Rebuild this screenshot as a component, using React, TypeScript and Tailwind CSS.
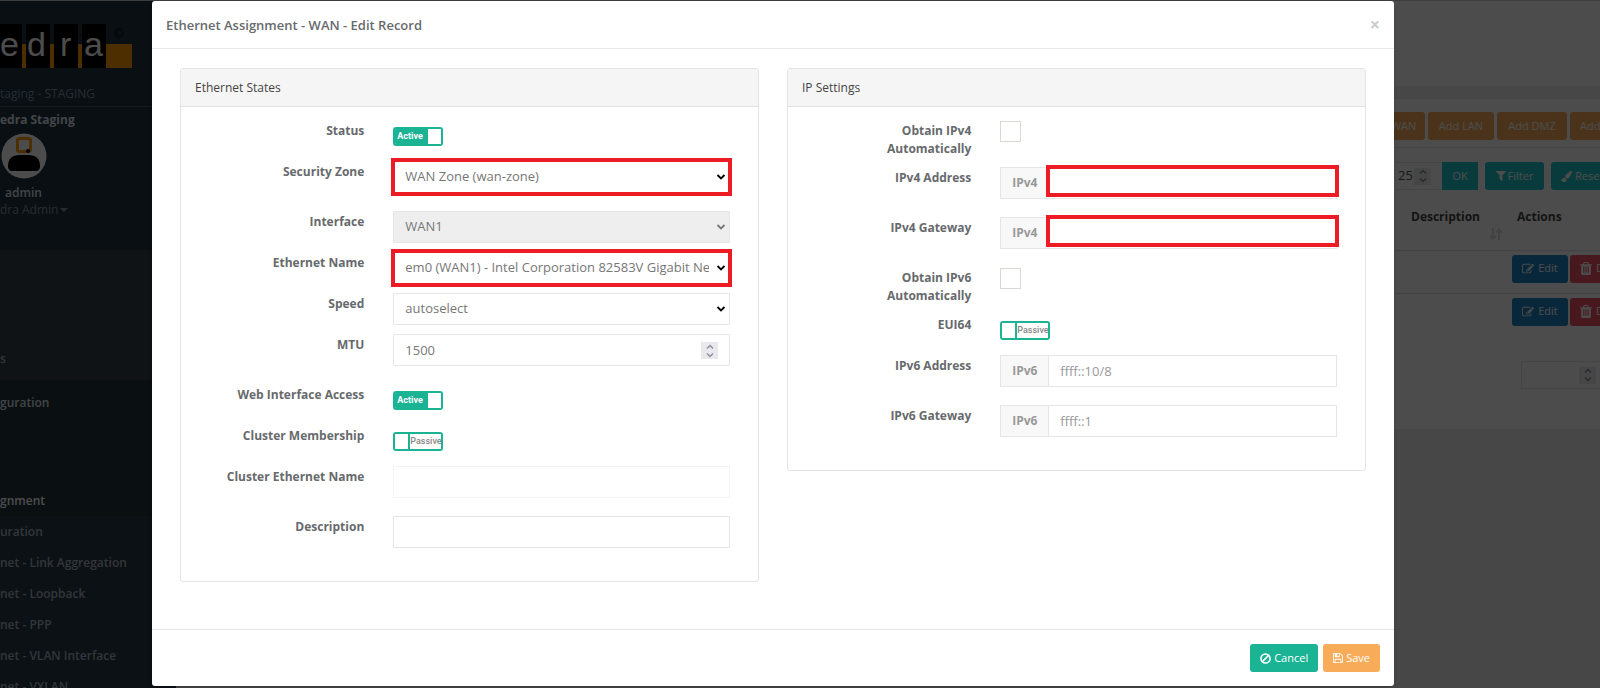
import { useState } from 'react';
import type { ReactNode } from 'react';
import { FaPaintBrush } from 'react-icons/fa';

function BanIcon() {
  return (
    <svg viewBox="0 0 12 12" className="size-[11px]" fill="none" stroke="currentColor" strokeWidth="1.7">
      <circle cx="6" cy="6" r="5" />
      <path d="M2.6 9.4 9.4 2.6" />
    </svg>
  );
}

function SaveIcon() {
  return (
    <svg viewBox="0 128 1536 1536" className="size-[10px]" fill="currentColor">
      <path d="M384 1536h768v-384h-768v384zM1280 1536h128v-896q0-14-10-38.5t-20-34.5l-281-281q-10-10-34-20t-39-10v416q0 40-28 68t-68 28h-576q-40 0-68-28t-28-68v-416h-128v1280h128v-416q0-40 28-68t68-28h832q40 0 68 28t28 68v416zM896 608v-320q0-13-9.5-22.5t-22.5-9.5h-192q-13 0-22.5 9.5t-9.5 22.5v320q0 13 9.5 22.5t22.5 9.5h192q13 0 22.5-9.5t9.5-22.5zM1536 640v928q0 40-28 68t-68 28h-1344q-40 0-68-28t-28-68v-1344q0-40 28-68t68-28h928q40 0 88 20t76 48l280 280q28 28 48 76t20 88z" />
    </svg>
  );
}

function EditIcon() {
  return (
    <svg viewBox="0 0 1792 1792" className="size-3" fill="currentColor">
      <path d="M888 1184l116-116-152-152-116 116v56h96v96h56zM1328 464q-16-16-33 1l-350 350q-17 17-1 33t33-1l350-350q17-17 1-33zM1408 1058v190q0 119-84.5 203.5t-203.5 84.5h-832q-119 0-203.5-84.5t-84.5-203.5v-832q0-119 84.5-203.5t203.5-84.5h832q63 0 117 25 15 7 18 23 3 17-9 29l-49 49q-14 14-32 8-23-6-45-6h-832q-66 0-113 47t-47 113v832q0 66 47 113t113 47h832q66 0 113-47t47-113v-126q0-13 9-22l64-64q15-15 35-7t20 29zM1312 320l288 288-672 672h-288v-288zM1756 452l-92 92-288-288 92-92q28-28 68-28t68 28l152 152q28 28 28 68t-28 68z" />
    </svg>
  );
}

function TrashIcon() {
  return (
    <svg viewBox="192 128 1408 1536" className="h-[13px] w-3" fill="currentColor">
      <path d="M704 1376v-704q0-14-9-23t-23-9h-64q-14 0-23 9t-9 23v704q0 14 9 23t23 9h64q14 0 23-9t9-23zm256 0v-704q0-14-9-23t-23-9h-64q-14 0-23 9t-9 23v704q0 14 9 23t23 9h64q14 0 23-9t9-23zm256 0v-704q0-14-9-23t-23-9h-64q-14 0-23 9t-9 23v704q0 14 9 23t23 9h64q14 0 23-9t9-23zm-544-992h448l-48-117q-7-9-17-11h-317q-10 2-17 11zm928 32v64q0 14-9 23t-23 9h-96v948q0 83-47 143.5t-113 60.5h-832q-66 0-113-59.5t-47-141.5v-952h-96q-14 0-23-9t-9-23v-64q0-14 9-23t23-9h309l70-167q15-37 54-63t79-26h320q40 0 79 26t54 63l70 167h309q14 0 23 9t9 23z" />
    </svg>
  );
}

function FilterIcon() {
  return (
    <svg viewBox="192 256 1408 1408" className="size-[10px]" fill="currentColor">
      <path d="M1595 295q17 41-14 70l-493 493v742q0 42-39 59-13 5-25 5-27 0-45-19l-256-256q-19-19-19-45v-486l-493-493q-31-29-14-70 17-39 59-39h1280q42 0 59 39z" />
    </svg>
  );
}

/* Up/down stepper shown inside number fields */
function Stepper() {
  return (
    <span className="pointer-events-none flex size-[17px] items-center justify-center bg-[#e9e9ed] text-[#8f8f9d]">
      <svg viewBox="0 0 8 14" className="h-[14px] w-2" fill="none" stroke="currentColor" strokeWidth="1.5">
        <path d="M1 4.5 4 1.5l3 3M1 9.5l3 3 3-3" />
      </svg>
    </span>
  );
}

function Highlight({ slim }: { slim?: boolean }) {
  return (
    <span
      className={
        slim
          ? 'pointer-events-none absolute -inset-x-[2px] -top-[2px] bottom-[2px] border-4 border-[#ed1c24]'
          : 'pointer-events-none absolute -inset-x-[2px] -inset-y-[3px] border-4 border-[#ed1c24]'
      }
    />
  );
}

function Row({ id, label, tall, children }: { id: string; label: string; tall?: boolean; children: ReactNode }) {
  return (
    <div className={tall ? 'mb-[18px] flex gap-7' : 'mb-[9px] flex gap-7'}>
      <label htmlFor={id} className="w-[30%] shrink-0 pt-[2px] pr-px text-right text-xs leading-[18px] font-bold">
        {label}
      </label>
      <div className="relative min-h-8 min-w-0 flex-1">{children}</div>
    </div>
  );
}

function Toggle({ id, initial = false }: { id: string; initial?: boolean }) {
  const [on, setOn] = useState(initial);
  return (
    <label className="mt-[7px] flex h-[19px] w-[50px] cursor-pointer overflow-hidden rounded-[3px] border-2 border-[#1ab394] font-[Roboto,sans-serif] text-[9px] leading-[15px]">
      <input id={id} type="checkbox" checked={on} onChange={() => setOn(!on)} className="sr-only" />
      {on ? (
        <>
          <span className="flex-1 bg-[#1ab394] pl-[2px] font-bold text-white">Active</span>
          <span className="w-[13px] bg-white" />
        </>
      ) : (
        <>
          <span className="w-[15px] shrink-0 border-r-2 border-[#1ab394] bg-white" />
          <span className="flex-1 bg-white font-medium text-[#888]">Passive</span>
        </>
      )}
    </label>
  );
}

function Select({ id, value, disabled, highlight }: { id: string; value: string; disabled?: boolean; highlight?: boolean }) {
  return (
    <>
      <select
        id={id}
        disabled={disabled}
        className="h-8 w-full appearance-none overflow-hidden rounded-[1px] border border-[#e5e6e7] bg-white pr-5 pl-[11px] text-[13px] text-[#777] disabled:bg-[#eee] disabled:opacity-100"
      >
        <option>{value}</option>
      </select>
      {highlight && <Highlight />}
      <svg
        viewBox="0 0 10 8"
        className={disabled ? 'pointer-events-none absolute top-3 right-1 h-2 w-[10px] text-[#777]' : 'pointer-events-none absolute top-3 right-1 h-2 w-[10px] text-black'}
        fill="none"
        stroke="currentColor"
        strokeWidth="1.8"
      >
        <path d="M1.5 2 5 5.5 8.5 2" />
      </svg>
    </>
  );
}

function AddressField({ id, addon, placeholder, highlight }: { id: string; addon: string; placeholder?: string; highlight?: boolean }) {
  return (
    <div className="flex h-8">
      <span className="flex w-12 shrink-0 items-center justify-center border border-r-0 border-[#e5e6e7] bg-[#f8f8f8] text-xs font-bold text-[#999]">
        {addon}
      </span>
      <div className="relative flex-1">
        <input id={id} type="text" placeholder={placeholder} className="h-8 w-full border border-[#e5e6e7] bg-white px-[11px] text-[13px] placeholder:text-[#999]" />
        {highlight && <Highlight slim />}
      </div>
    </div>
  );
}

function CheckBox({ id }: { id: string }) {
  return <input id={id} type="checkbox" className="mt-px block size-[21px] appearance-none border border-[#d9d8d3] bg-white checked:bg-[#1ab394]" />;
}

function Panel({ title, children }: { title: string; children: ReactNode }) {
  return (
    <section className="flex-1 rounded-[3px] border border-[#e4e4e4] bg-white">
      <h3 className="border-b border-[#e0e0e0] bg-[#f5f5f5] px-[14px] py-[9px] text-xs leading-[19px] text-[#444]">{title}</h3>
      <div className="px-7 pt-[13px] pb-[15px]">{children}</div>
    </section>
  );
}

function Sidebar() {
  const links = ['uration', 'net - Link Aggregation', 'net - Loopback', 'net - PPP', 'net - VLAN Interface', 'net - VXLAN'];
  return (
    <nav className="w-44 shrink-0 bg-[#2a3a46] text-xs font-semibold whitespace-nowrap text-[#a7b1c2]">
      <div className="h-[249px] bg-[#1f3340]">
        <svg viewBox="0 0 136 46" className="block h-[69px] w-[136px] pt-[23px]">
          <rect y="20" width="132" height="24" fill="#f90" />
          <g fill="#000">
            <rect width="22" height="44" />
            <rect x="26" width="24" height="44" />
            <rect x="54" width="24" height="44" />
            <rect x="82" width="24" height="44" />
          </g>
          <g fill="#1f3340">
            <rect x="22" width="4" height="20" />
            <rect x="50" width="4" height="20" />
            <rect x="78" width="4" height="20" />
          </g>
          <g fill="#fff" fontFamily="Liberation Sans" fontSize="34" fontWeight="400">
            <text x="0" y="32">e</text>
            <text x="27" y="32">d</text>
            <text x="60" y="32">r</text>
            <text x="84" y="32">a</text>
          </g>
          <text x="114" y="14" fill="#000" fontFamily="Liberation Sans" fontSize="13" fontWeight="400">©</text>
        </svg>
        <p className="mt-4 pb-1 leading-4 font-normal text-[#8095a8]">taging - STAGING</p>
        <div className="border-t border-[#3d5060] pt-1 leading-[18px]">
          <p className="font-bold text-[#dfe4ed]">edra Staging</p>
          <svg viewBox="0 0 46 46" className="mt-1 ml-px size-[46px]">
            <circle cx="23" cy="23" r="22.5" fill="#fff" />
            <rect x="16.5" y="5.500" width="13" height="13" rx="2" fill="none" stroke="#f90" strokeWidth="3" />
            <circle cx="27" cy="18" r="2" fill="#000" />
            <path d="M7 33q0-11 12-11h8q12 0 12 11 0 5-4 5H11q-4 0-4-5z" fill="#000" />
          </svg>
          <p className="mt-[5px] ml-[5px] text-[#dfe4ed]">admin</p>
          <a href="#account" className="flex items-center leading-4 font-normal text-[#8095a8]">
            <span>dra Admin</span>
            <span className="ml-[2px] border-x-4 border-t-4 border-x-transparent border-t-current" />
          </a>
        </div>
      </div>
      <div className="flex h-[130px] items-end bg-[#334048] pb-3">
        <a href="#status" className="leading-[18px]">s</a>
      </div>
      <div className="h-[136px] bg-[#24323c] pt-[13px]">
        <a href="#configuration" className="block leading-5 text-[#dfe4ed]">guration</a>
        <a href="#assignment" className="mt-[78px] block leading-5 text-white">gnment</a>
      </div>
      <div className="flex flex-col">
        {links.map((link) => (
          <a key={link} href="#network" className="h-[31px] leading-[31px]">{link}</a>
        ))}
      </div>
    </nav>
  );
}

function RecordRow() {
  return (
    <tr className="h-[43px] border-t border-[#ddd] align-top">
      <td />
      <td>
        <div className="flex gap-[2px] pt-1 pl-[6px] text-white">
          <button type="button" className="flex h-7 w-14 shrink-0 items-center justify-center gap-1 rounded-[3px] bg-[#1c84c6]">
            <EditIcon /> Edit
          </button>
          <button type="button" className="flex h-7 w-[72px] shrink-0 items-center gap-1 rounded-[3px] bg-[#ed5565] pl-[10px]">
            <TrashIcon /> Delete
          </button>
        </div>
      </td>
    </tr>
  );
}

function RecordsPage() {
  return (
    <main className="min-w-0 flex-1 overflow-hidden bg-[#eee] text-[11px] whitespace-nowrap text-[#676a6c]">
      <div className="h-[85px] bg-white" />
      <section className="mt-3 border-t border-[#e7eaec] bg-white pb-10">
        <div className="flex h-[49px] border-b border-[#e7eaec] pt-[13px]">
          <div className="ml-auto flex w-[241px] gap-[3px] text-white">
            <button type="button" className="h-7 w-[66px] shrink-0 rounded-[3px] bg-[#f8ac59]">Add WAN</button>
            <button type="button" className="h-7 w-[66px] shrink-0 rounded-[3px] bg-[#f8ac59]">Add LAN</button>
            <button type="button" className="h-7 w-[70px] shrink-0 rounded-[3px] bg-[#f8ac59]">Add DMZ</button>
            <button type="button" className="h-7 w-[70px] shrink-0 rounded-[3px] bg-[#f8ac59] pl-[10px] text-left">Add</button>
          </div>
        </div>
        <div className="mt-[14px] ml-auto flex h-7 w-[205px] gap-[7px] text-white">
          <div className="flex shrink-0">
            <div className="flex w-[47px] items-center border-y border-[#e5e6e7]">
              <input type="text" aria-label="Rows per page" defaultValue="25" className="w-[19px] pl-[3px] text-[13px] text-[#555]" />
              <Stepper />
            </div>
            <button type="button" className="h-7 w-9 bg-[#23c6c8]">OK</button>
          </div>
          <button type="button" className="flex h-7 w-[59px] shrink-0 items-center justify-center gap-[2px] rounded-[3px] bg-[#23c6c8]">
            <FilterIcon /> Filter
          </button>
          <button type="button" className="flex h-7 w-[66px] shrink-0 items-center gap-[3px] rounded-[3px] bg-[#23c6c8] pl-[10px]">
            <FaPaintBrush className="size-[11px]" /> Reset
          </button>
        </div>
        <table className="mt-[15px] ml-auto w-[205px] table-fixed text-left">
          <thead>
            <tr className="h-[45px] align-top text-xs leading-6 text-[#444]">
              <th className="w-[111px] pl-4">
                Description
                <svg viewBox="0 0 12 12" className="-mt-px ml-[79px] size-3" fill="none" stroke="#ddd" strokeWidth="2">
                  <path d="M3 0v10M0 7.500 3 10.500 6 7.500M9 12V2M6 4.500 9 1.500 12 4.500" />
                </svg>
              </th>
              <th className="pl-[11px]">Actions</th>
            </tr>
          </thead>
          <tbody>
            <RecordRow />
            <RecordRow />
          </tbody>
        </table>
        <div className="mt-[25px] ml-auto flex h-7 w-[79px] items-center border border-r-0 border-[#e5e6e7]">
          <input type="text" aria-label="Page" className="w-[57px]" />
          <Stepper />
        </div>
      </section>
    </main>
  );
}

function EditRecordDialog() {
  return (
    <div role="dialog" aria-labelledby="dialog-title" className="w-full rounded-[3px] bg-white shadow-md">
      <header className="flex h-[48px] items-center justify-between border-b border-[#e9e9e9] px-[14px] pt-[2px]">
        <h2 id="dialog-title" className="text-[13px] font-semibold">Ethernet Assignment - WAN - Edit Record</h2>
        <button type="button" aria-label="Close" className="pb-1 text-lg leading-none font-bold text-[#ccc]">×</button>
      </header>

      <div className="flex items-start gap-7 px-7 pt-[19px] pb-[47px]">
        <Panel title="Ethernet States">
          <Row id="status" label="Status">
            <Toggle id="status" initial />
          </Row>
          <Row id="zone" label="Security Zone" tall>
            <Select id="zone" value="WAN Zone (wan-zone)" highlight />
          </Row>
          <Row id="interface" label="Interface">
            <Select id="interface" value="WAN1" disabled />
          </Row>
          <Row id="ethernet" label="Ethernet Name">
            <Select id="ethernet" value="em0 (WAN1) - Intel Corporation 82583V Gigabit Network Connection" highlight />
          </Row>
          <Row id="speed" label="Speed">
            <Select id="speed" value="autoselect" />
          </Row>
          <Row id="mtu" label="MTU" tall>
            <input
              id="mtu"
              type="number"
              defaultValue={1500}
              className="block h-8 w-full [appearance:textfield] rounded-[1px] border border-[#e5e6e7] bg-white px-[11px] text-[13px] text-[#777]"
            />
            <span className="absolute top-2 right-3">
              <Stepper />
            </span>
          </Row>
          <Row id="web" label="Web Interface Access">
            <Toggle id="web" initial />
          </Row>
          <Row id="cluster" label="Cluster Membership">
            <Toggle id="cluster" />
          </Row>
          <Row id="cluster-name" label="Cluster Ethernet Name" tall>
            <input id="cluster-name" type="text" disabled className="block h-8 w-full rounded-[1px] border border-[#f4f4f4] bg-white px-[11px] text-[13px]" />
          </Row>
          <Row id="description" label="Description" tall>
            <input id="description" type="text" className="block h-8 w-full rounded-[1px] border border-[#e5e6e7] bg-white px-[11px] text-[13px] text-[#777]" />
          </Row>
        </Panel>

        <Panel title="IP Settings">
          <Row id="auto4" label="Obtain IPv4 Automatically">
            <CheckBox id="auto4" />
          </Row>
          <Row id="address4" label="IPv4 Address" tall>
            <AddressField id="address4" addon="IPv4" highlight />
          </Row>
          <Row id="gateway4" label="IPv4 Gateway" tall>
            <AddressField id="gateway4" addon="IPv4" highlight />
          </Row>
          <Row id="auto6" label="Obtain IPv6 Automatically">
            <CheckBox id="auto6" />
          </Row>
          <Row id="eui64" label="EUI64">
            <Toggle id="eui64" />
          </Row>
          <Row id="address6" label="IPv6 Address" tall>
            <AddressField id="address6" addon="IPv6" placeholder="ffff::10/8" />
          </Row>
          <Row id="gateway6" label="IPv6 Gateway" tall>
            <AddressField id="gateway6" addon="IPv6" placeholder="ffff::1" />
          </Row>
        </Panel>
      </div>

      <footer className="flex justify-end gap-[5px] border-t border-[#e5e5e5] p-[14px] text-[11px] text-white">
        <button type="button" className="flex h-7 items-center gap-[3px] rounded-[3px] bg-[#1ab394] px-[10px]">
          <BanIcon /> Cancel
        </button>
        <button type="button" className="flex h-7 items-center gap-[3px] rounded-[3px] bg-[#f8ac59] px-[10px]">
          <SaveIcon /> Save
        </button>
      </footer>
    </div>
  );
}

export default function App() {
  return (
    <div className="relative flex min-h-screen overflow-hidden font-['Open_Sans',sans-serif] text-[#676a6c]">
      <div className="absolute inset-0 flex overflow-hidden border-t border-[#ccc]">
        <Sidebar />
        <RecordsPage />
      </div>
      <div className="absolute inset-0 bg-black/70" />
      <div className="relative w-full pt-px pr-[206px] pb-[2px] pl-[152px]">
        <EditRecordDialog />
      </div>
    </div>
  );
}
